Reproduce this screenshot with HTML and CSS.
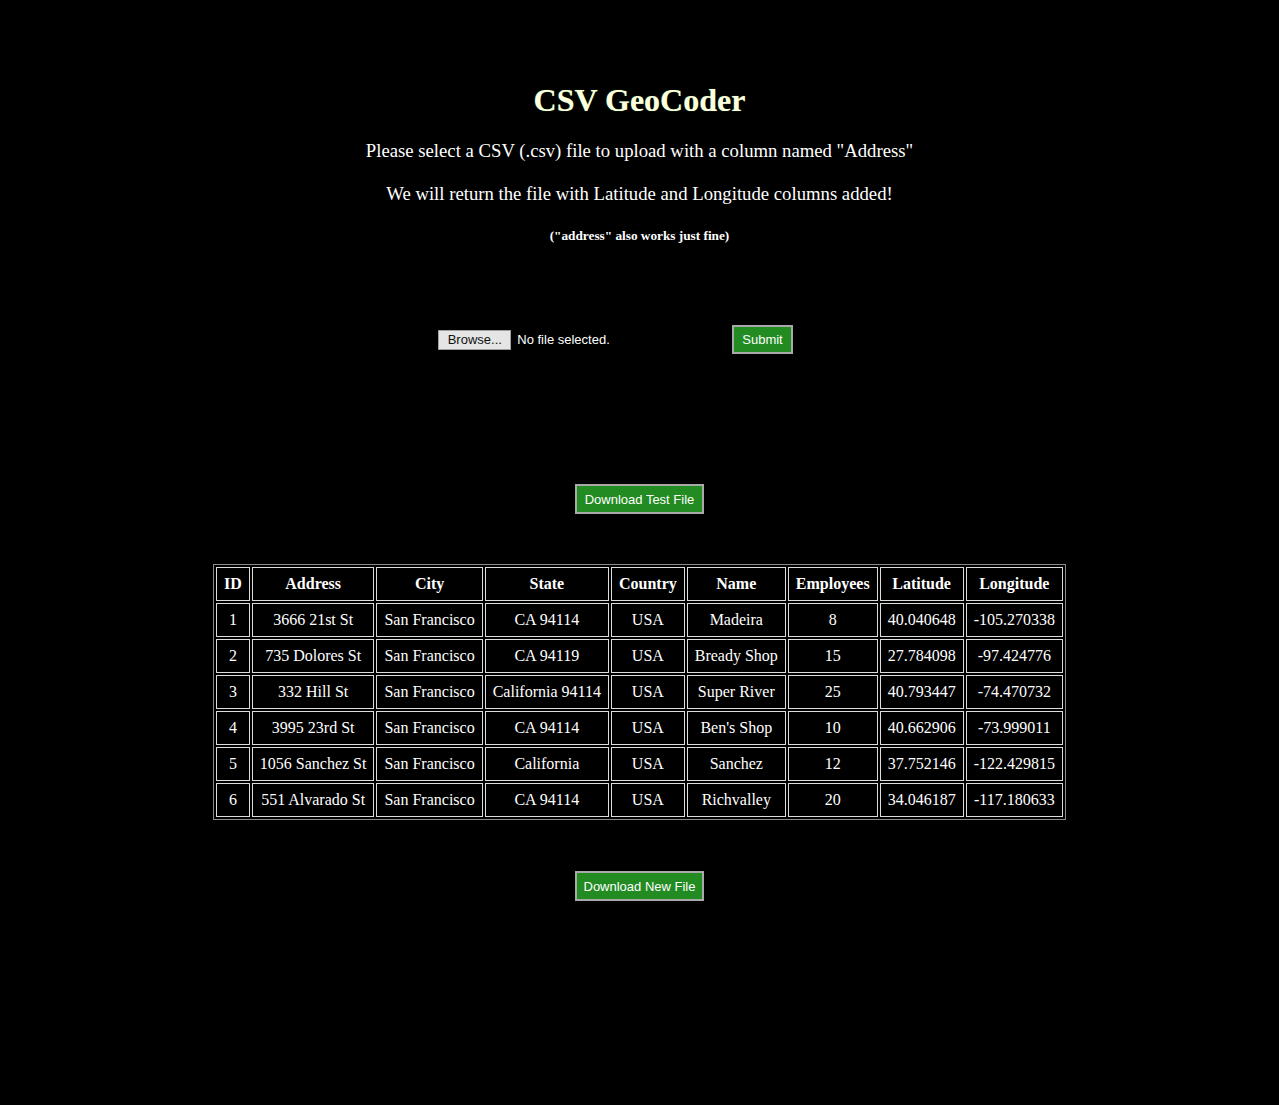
FILE: index.html
```html
<!DOCTYPE html>
<html>
<head>
<meta charset="utf-8">
<title>CSV GeoCoder</title>
<link rel="stylesheet" href="styles.css">
</head>
<body>
<main class="page">
  <h1 class="title">CSV GeoCoder</h1>
  <p class="lead">Please select a CSV (.csv) file to upload with a column named "Address"</p>
  <p class="lead">We will return the file with Latitude and Longitude columns added!</p>
  <p class="note">("address" also works just fine)</p>

  <form class="upload">
    <div class="file">
      <label class="browse">Browse...<input type="file" class="hidden-input"></label>
      <span class="file-name">No file selected.</span>
    </div>
    <button type="button" class="btn">Submit</button>
  </form>

  <button type="button" class="btn btn-wide test-btn">Download Test File</button>

  <table class="data">
    <thead>
      <tr><th>ID</th><th>Address</th><th>City</th><th>State</th><th>Country</th><th>Name</th><th>Employees</th><th>Latitude</th><th>Longitude</th></tr>
    </thead>
    <tbody>
      <tr><td>1</td><td>3666 21st St</td><td>San Francisco</td><td>CA 94114</td><td>USA</td><td>Madeira</td><td>8</td><td>40.040648</td><td>-105.270338</td></tr>
      <tr><td>2</td><td>735 Dolores St</td><td>San Francisco</td><td>CA 94119</td><td>USA</td><td>Bready Shop</td><td>15</td><td>27.784098</td><td>-97.424776</td></tr>
      <tr><td>3</td><td>332 Hill St</td><td>San Francisco</td><td>California 94114</td><td>USA</td><td>Super River</td><td>25</td><td>40.793447</td><td>-74.470732</td></tr>
      <tr><td>4</td><td>3995 23rd St</td><td>San Francisco</td><td>CA 94114</td><td>USA</td><td>Ben's Shop</td><td>10</td><td>40.662906</td><td>-73.999011</td></tr>
      <tr><td>5</td><td>1056 Sanchez St</td><td>San Francisco</td><td>California</td><td>USA</td><td>Sanchez</td><td>12</td><td>37.752146</td><td>-122.429815</td></tr>
      <tr><td>6</td><td>551 Alvarado St</td><td>San Francisco</td><td>CA 94114</td><td>USA</td><td>Richvalley</td><td>20</td><td>34.046187</td><td>-117.180633</td></tr>
    </tbody>
  </table>

  <button type="button" class="btn btn-wide new-btn">Download New File</button>
</main>
</body>
</html>
```

FILE: styles.css
```css
html, body {
  margin: 0;
  padding: 0;
  background: #000;
}

body {
  color: #fff;
  font-family: "Liberation Serif", "Times New Roman", serif;
  min-height: 1105px;
}

.page {
  display: flex;
  flex-direction: column;
  align-items: center;
  padding-top: 81px;
}

.title {
  margin: 0;
  font-size: 32px;
  line-height: 38px;
  font-weight: bold;
  color: #ffffe0;
  text-shadow: 0 0 1px #2e8b2e;
}

.lead {
  margin: 21px 0 0;
  font-size: 18.72px;
  line-height: 22px;
}

.note {
  margin: 24px 0 0;
  font-size: 13.28px;
  line-height: 14px;
  font-weight: bold;
}

.upload {
  display: flex;
  align-items: center;
  justify-content: center;
  margin-top: 82px;
  padding-right: 48px;
  width: 100%;
  box-sizing: border-box;
}

.file {
  display: flex;
  align-items: center;
  width: 294px;
  font-family: "Liberation Sans", Arial, sans-serif;
  font-size: 13px;
}

.browse {
  display: inline-block;
  box-sizing: border-box;
  height: 20px;
  width: 73px;
  line-height: 18px;
  text-align: center;
  background: #e5e5e5;
  color: #111;
  border: 1px solid #a0a0a0;
}

.hidden-input {
  display: none;
}

.file-name {
  margin-left: 6px;
  color: #fff;
}

.btn {
  box-sizing: border-box;
  height: 29px;
  padding: 0 8px;
  background: #228b22;
  color: #fff;
  border: 2px solid #a9a9a9;
  font-family: "Liberation Sans", Arial, sans-serif;
  font-size: 13px;
}

.btn-wide {
  width: 129px;
  height: 30px;
  padding: 0;
}

.test-btn {
  margin-top: 130px;
}

.data {
  margin-top: 50px;
  border: 1px solid #8a8a8a;
  border-spacing: 2px;
  font-size: 16px;
  line-height: 18px;
}

.data th,
.data td {
  border: 1px solid #dcdcdc;
  padding: 7px 7px;
  text-align: center;
  white-space: nowrap;
}

.data th {
  font-weight: bold;
}

.new-btn {
  margin-top: 51px;
}
```
